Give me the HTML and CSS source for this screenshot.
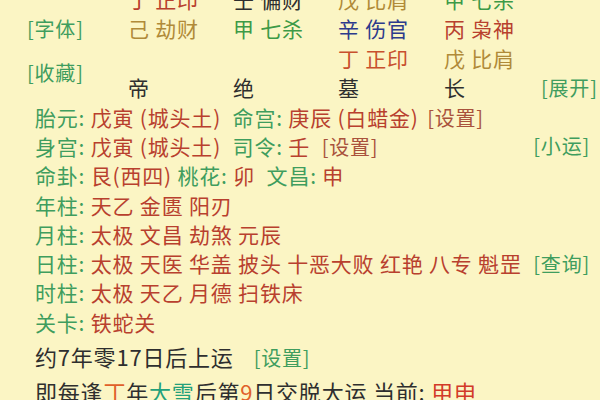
FILE: index.html
```html
<!DOCTYPE html>
<html lang="zh">
<head>
<meta charset="utf-8">
<link rel="stylesheet" href="styles.css">
</head>
<body>
<div class="page">
  <div class="pillars">
    <div class="side s-font g">[字体]</div>
    <div class="side s-fav g">[收藏]</div>

    <div class="c1 r1 red">丁 正印</div>
    <div class="c2 r1 dark">壬 偏财</div>
    <div class="c3 r1 olive">戊 比肩</div>
    <div class="c4 r1 grn">甲 七杀</div>

    <div class="c1 r2 olive">己 劫财</div>
    <div class="c2 r2 grn">甲 七杀</div>
    <div class="c3 r2 blue">辛 伤官</div>
    <div class="c4 r2 red">丙 枭神</div>

    <div class="c3 r3 red2">丁 正印</div>
    <div class="c4 r3 olive">戊 比肩</div>

    <div class="c1 r4 dark">帝</div>
    <div class="c2 r4 dark">绝</div>
    <div class="c3 r4 dark">墓</div>
    <div class="c4 r4 dark">长</div>
    <div class="c5 r4 g">[展开]</div>
  </div>

  <div class="info">
    <div class="line"><span><span class="g">胎元:</span> <span class="red">戊寅 (城头土)</span> <span class="g sp">命宫:</span> <span class="red">庚辰 (白蜡金)</span> <span class="link sp2">[设置]</span></span></div>
    <div class="line"><span><span class="g">身宫:</span> <span class="red">戊寅 (城头土)</span> <span class="g sp">司令:</span> <span class="red">壬</span> <span class="link sp">[设置]</span></span><span class="g">[小运]</span></div>
    <div class="line"><span><span class="g">命卦:</span> <span class="red">艮(西四)</span> <span class="g">桃花:</span> <span class="red">卯</span> <span class="g sp">文昌:</span> <span class="red">申</span></span></div>
    <div class="line"><span><span class="g">年柱:</span> <span class="red">天乙 金匮 阳刃</span></span></div>
    <div class="line"><span><span class="g">月柱:</span> <span class="red">太极 文昌 劫煞 元辰</span></span></div>
    <div class="line"><span><span class="g">日柱:</span> <span class="red">太极 天医 华盖 披头 十恶大败 红艳 八专 魁罡</span></span><span class="g">[查询]</span></div>
    <div class="line"><span><span class="g">时柱:</span> <span class="red">太极 天乙 月德 扫铁床</span></span></div>
    <div class="line"><span><span class="g">关卡:</span> <span class="red">铁蛇关</span></span></div>
  </div>

  <div class="luck">
    <div class="lline"><span class="dark">约7年零17日后上运</span><span class="g set">[设置]</span></div>
    <div class="lline"><span class="dark">即每逢</span><span class="orange">丁</span><span class="dark">年</span><span class="teal">大雪</span><span class="dark">后第</span><span class="orange">9</span><span class="dark">日交脱大运 当前: </span><span class="red3">甲申</span></div>
  </div>
</div>
</body>
</html>
```

FILE: styles.css
```css
html, body {
  margin: 0;
  padding: 0;
}
body {
  background: #fbf5c4;
  font-family: "Noto Sans CJK SC", "Noto Sans", sans-serif;
  font-size: 21px;
  letter-spacing: 0.8px;
  width: 600px;
  height: 400px;
  overflow: hidden;
}
.page {
  width: 600px;
}
.pillars {
  display: grid;
  grid-template-columns: 128px 105px 105px 106px 97px 1fr;
  grid-template-rows: repeat(4, 29.5px);
  margin-top: -16px;
  align-items: center;
  white-space: nowrap;
}
.side {
  grid-column: 1;
  padding-left: 27px;
  font-size: 20px;
}
.s-font { grid-row: 2; }
.s-fav { grid-row: 3 / span 2; }
.c1 { grid-column: 2; }
.c2 { grid-column: 3; }
.c3 { grid-column: 4; }
.c4 { grid-column: 5; }
.c5 { grid-column: 6; justify-self: end; padding-right: 10px; font-size: 20px; }
.r1 { grid-row: 1; }
.r2 { grid-row: 2; }
.r3 { grid-row: 3; }
.r4 { grid-row: 4; }

.info {
  padding: 0 10px 0 35px;
}
.line {
  display: flex;
  justify-content: space-between;
  align-items: center;
  height: 29.3px;
  white-space: nowrap;
}
.line > .g:last-child { font-size: 20px; }
.sp { margin-left: 6px; }
.sp2 { margin-left: 3px; }
.luck {
  padding: 3px 0 0 35px;
  font-size: 22px;
}
.lline {
  height: 35px;
  line-height: 35px;
  white-space: pre;
}
.set {
  margin-left: 20px;
  font-size: 20px;
}

.g { color: #3f9d5e; }
.grn { color: #3d9a47; }
.red { color: #b8402e; }
.red2 { color: #c8502e; }
.red3 { color: #d23a28; }
.link { color: #a9523c; font-size: 20px; }
.dark { color: #2e2e2e; }
.olive { color: #b08a38; }
.blue { color: #2c3a8c; }
.orange { color: #e0602a; }
.teal { color: #22a07a; }
```
